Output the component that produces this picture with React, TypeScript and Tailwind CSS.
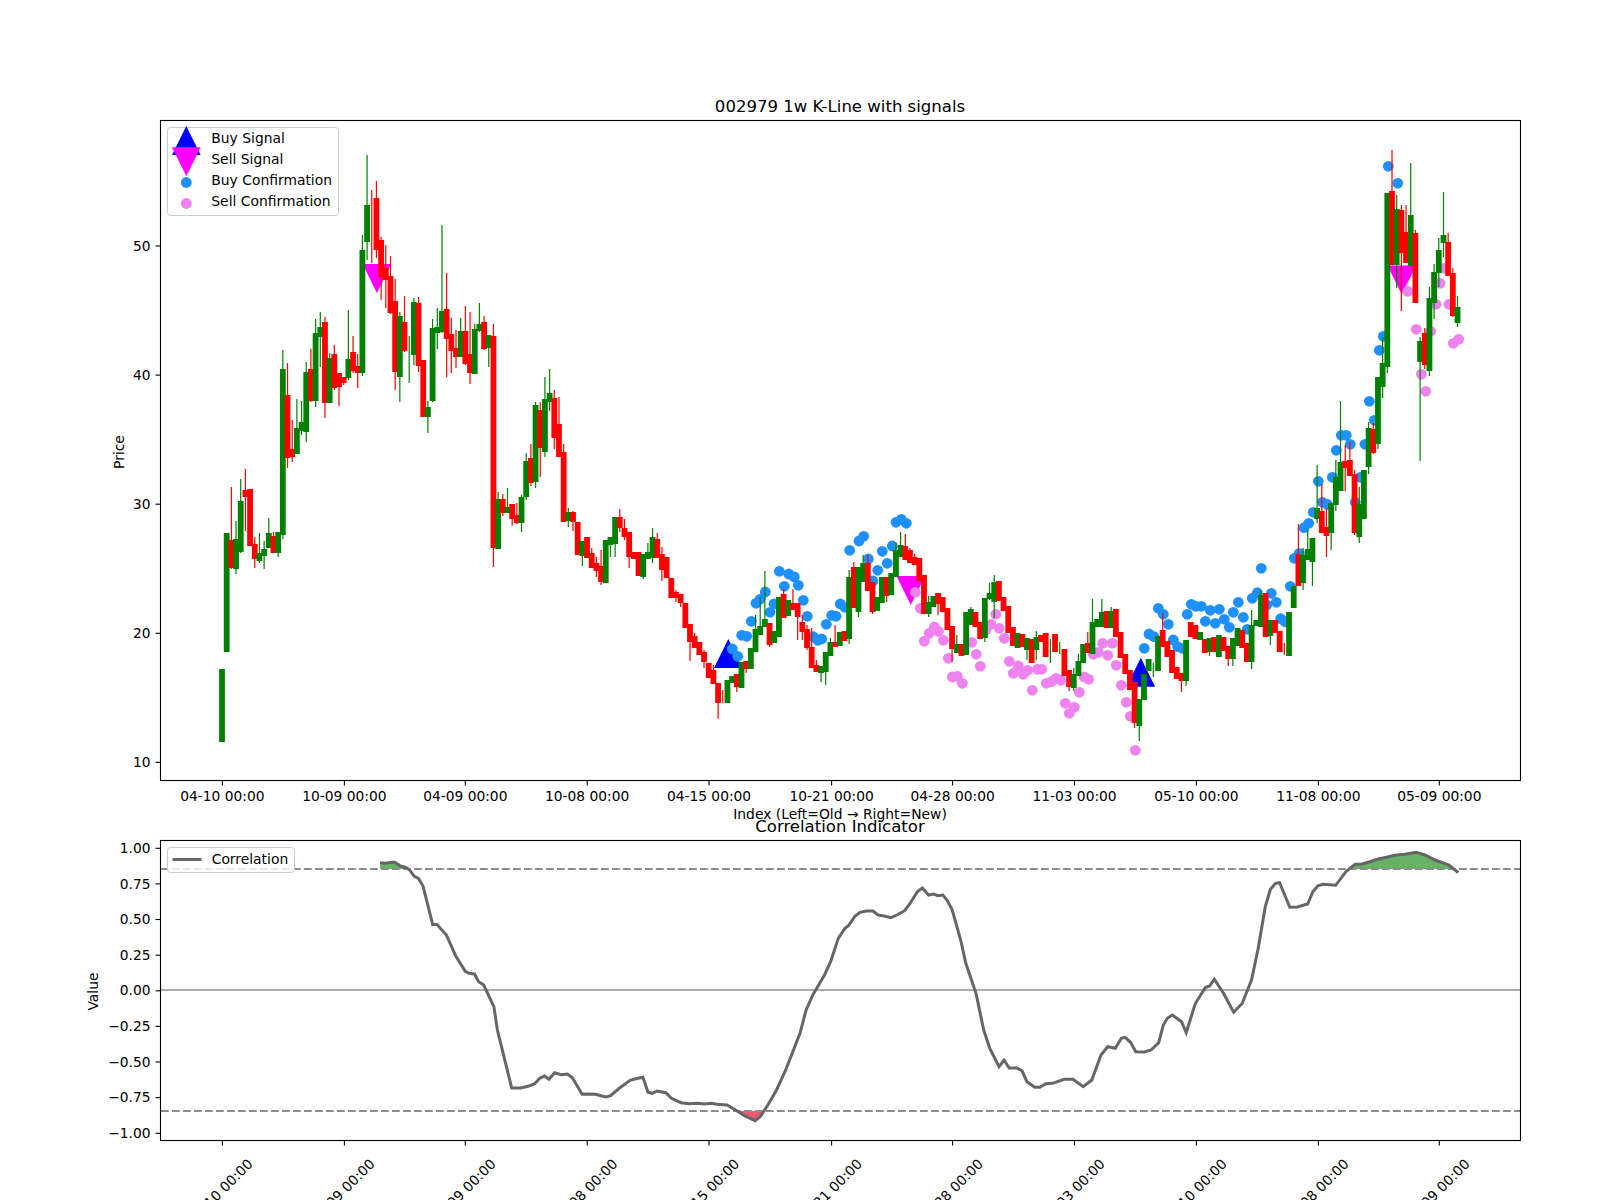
type Candle = [string, number, number, number?, number?];

// page pixels: colour, body top, body bottom, wick top, wick bottom. Equal top/bottom means wick only.
const candles: Candle[] = [
  ["g",669,742],["g",533,652],["r",540,568,487,569],["g",539,569,521,574],["g",501,552,479,553],["r",490,497,469,531],["r",489,546],["r",544,559,537,568],["g",553,561,533,563],["g",549,556,541,569],
  ["g",533,548,518,548],["r",536,553,532,553],["g",532,553,532,557],["g",369,535,350,539],["r",395,458,363,468],["r",449,457,420,462],["g",428,454,399,454],["g",422,431,401,435],["g",372,432,362,442],["r",369,401,349,402],
  ["g",333,401,319,407],["g",327,337,312,367],["r",322,403,317,418],["g",358,403,353,403],["r",354,388,345,390],["r",373,387,373,406],["r",377,383,377,385],["g",359,378,310,380],["r",352,371,336,373],["r",366,373,354,388],
  ["g",250,373,235,376],["g",205,242,155,260],["r",250,250,190,263],["r",198,250,181,258],["r",240,277,237,300],["r",268,280,245,308],["r",276,313,256,314],["r",301,372,279,390],["g",316,377,312,402],["r",322,351,296,352],
  ["g",340,340,336,383],["g",302,355,298,365],["r",303,366,297,372],["r",360,417],["g",407,417,401,433],["g",328,401,319,402],["g",327,333,308,349],["g",311,332,225,333],["r",309,339,273,377],["r",334,351,318,373],
  ["r",348,357,330,368],["g",331,357,318,357],["r",331,364,306,365],["r",354,373,312,384],["g",329,374,324,374],["g",324,331,303,332],["r",322,349,316,350],["g",335,348,335,367],["r",336,548,324,567],["g",499,549,492,549],
  ["r",499,513,494,516],["g",507,513,488,513],["r",504,519,504,526],["r",515,523,503,524],["g",497,523,495,532],["g",461,497,453,500],["r",458,483,444,486],["g",405,482,402,488],["r",410,448,402,477],["g",399,452,377,457],
  ["g",393,402,369,411],["r",398,438,390,449],["r",424,457,397,457],["r",452,522,444,522],["g",512,521,508,527],["r",512,522,511,531],["r",522,555],["g",541,556,541,566],["r",537,558],["r",553,568,548,568],
  ["r",563,571,557,577],["r",566,582,550,585],["g",540,583],["g",537,545,537,557],["g",517,544,517,557],["r",517,528,509,532],["r",528,537,519,540],["r",532,557,532,568],["r",552,559],["r",552,576,552,576],
  ["g",554,577,554,579],["g",552,559,543,559],["g",537,558,528,563],["r",539,558,533,558],["r",554,570,547,581],["r",557,578],["r",578,598],["r",592,598,590,602],["r",594,603,594,607],["r",603,628],
  ["r",624,642,624,661],["r",636,648,633,648],["r",642,655],["r",652,662,650,668],["r",663,678],["r",670,684,665,684],["r",683,703,683,719],["r",697,697,690,703],["g",680,703],["g",676,683],
  ["r",674,687,674,692],["g",662,688],["r",661,669,661,673],["g",648,669],["g",629,652,615,652],["g",626,635,597,635],["g",619,627,571,627],["r",623,645,623,647],["g",631,643],["g",597,637],
  ["r",594,618,589,618],["g",600,616],["r",603,610,589,610],["r",603,617,603,640],["r",622,632,615,640],["r",629,648,625,650],["r",647,668,628,668],["r",665,672,660,672],["g",666,673,666,682],["g",652,672,652,685],
  ["g",642,656,638,656],["r",642,647,625,647],["g",632,646,632,646],["r",631,641],["g",577,639,570,644],["r",567,608,562,608],["g",567,612,567,617],["g",563,582,555,582],["r",563,591,555,591],["r",582,612,582,614],
  ["g",597,611],["g",577,603],["r",577,596,577,602],["g",573,595],["g",550,577,543,577],["g",545,557,532,557],["r",546,560,534,560],["r",550,563,548,563],["r",557,565,554,565],["r",558,581],
  ["r",575,614],["g",602,614,596,617],["g",596,607],["r",593,604,593,615],["r",597,612],["r",608,630],["r",626,649,626,662],["g",644,653,635,653],["r",644,656],["g",612,655],
  ["g",609,625,607,625],["r",612,627],["r",622,639],["g",598,638,598,642],["g",593,599,583,600],["g",582,602,575,618],["r",581,601],["r",597,611],["r",606,633],["r",627,646],
  ["g",633,648],["r",634,647],["g",638,650,638,660],["r",639,663],["g",637,650,631,660],["r",635,642],["r",633,657],["g",639,639,639,663],["r",634,652],["g",642,642,642,654],
  ["r",649,676],["r",670,687,670,691],["g",674,688,668,691],["g",661,676,654,676],["g",644,663],["r",643,653,632,653],["g",622,654,599,654],["g",619,627],["g",612,627,599,627],["r",611,628],
  ["g",611,628,607,628],["r",609,637],["r",632,658],["r",654,674],["r",670,690],["r",682,723,682,728],["g",699,726,699,741],["g",674,700],["g",659,671],["g",663,663,663,677],
  ["g",636,671],["r",630,647,613,647],["r",641,657],["r",650,673],["r",667,679],["r",673,681,673,692],["g",640,681,640,686],["r",622,637],["r",625,639],["g",632,640],
  ["r",639,653],["g",638,652,638,656],["r",637,652],["g",635,657],["r",637,651],["r",646,659,646,666],["g",638,659,638,666],["g",628,646],["r",630,648],["r",643,662],
  ["g",625,662,610,669],["g",620,626],["g",595,627,590,627],["r",593,637],["g",620,636,620,645],["r",620,633],["r",631,652],["r",643,643,643,655],["g",612,656],["g",586,608],
  ["r",554,586,524,586],["g",555,583,548,590],["g",549,560,530,560],["g",538,562,538,586],["g",508,519,465,523],["r",511,533,484,533],["r",527,536,508,557],["g",503,533,503,550],["g",477,505,460,511],["g",462,491,401,491],
  ["r",461,468,445,491],["r",460,476,442,476],["r",474,533,470,535],["g",504,537,487,543],["g",470,519],["g",428,467,422,474],["r",429,453,423,454],["g",377,444,377,449],["g",363,387,337,398],["g",193,367,193,373],
  ["r",191,265,150,265],["g",209,265,195,288],["r",210,253,205,311],["r",232,263,205,263],["g",215,266,163,266],["r",233,303,230,303],["g",341,362,337,461],["r",333,365,328,369],["g",298,371,287,376],["g",272,303,264,319],
  ["g",250,273,238,287],["g",235,243,192,257],["r",242,276,233,276],["r",273,316,268,317],["g",307,323,296,327],
];

const blueDots: [number, number][] = [
  [732.3,649],[737.7,656.3],[741.7,635.3],[746.7,636.3],[751.3,621.3],[756,603.3],[760,599.3],[765.3,592],[774,604],[770,612.3],[779.3,571.3],[784.3,586.3],[788.7,574],[794.3,577],[798.3,585.3],[803.3,600.3],[807.3,616.3],[813.3,636.7],[817.7,640.3],[821.7,639],[826.3,624.3],[831.7,615.3],[836,616.3],[840.3,604],[845,607.3],[849.7,550.3],[859,541],[863.7,536.3],[868.3,559],[873,581],[877.7,570.3],[882.3,551.3],[887.3,563.3],[892.3,546],[896,522.3],[901.3,519.3],[906.3,523.3],
  [1144.3,648.3],[1149,634],[1154,636.7],[1158.3,608.3],[1163.3,614.3],[1168.3,624.3],[1173.3,640],[1177.7,646.7],[1182.3,648.3],[1187.3,614.3],[1191.3,604.3],[1196,606.3],[1201.3,606.3],[1205.3,621.3],[1210.3,610.3],[1215.3,623.3],[1219.3,609.3],[1224.3,619.3],[1229.3,627.3],[1233.3,612.3],[1238.3,602.3],[1243.3,617.3],[1247.3,629.3],[1252.3,598.3],[1257.3,592.7],[1261.3,568.3],[1266.7,605],[1271.3,593.3],[1276.3,602.3],[1280.7,618.7],[1285,621.7],[1290.3,586.3],[1294.3,558.3],[1299.3,553.3],[1304,527.7],[1308.7,523.3],[1313.3,512.3],[1318.3,481.3],[1322.3,502.3],[1327.3,504.3],[1332.3,477.3],[1336.3,450.3],[1341.3,435.3],[1346.3,435.3],[1350.3,444.3],[1355.3,502.3],[1360.3,477.3],[1365,444.3],[1369.3,401.3],[1374.3,420.3],[1379.3,350.3],[1383.3,336.3],[1388.3,166.3],[1397.7,183.3],
];

const pinkDots: [number, number][] = [
  [915.3,592.3],[920.3,608.3],[924.3,641.3],[929.3,633.3],[934.3,627],[938.3,631.3],[943.3,640.3],[948.3,658.3],[952.3,677],[957.3,676.3],[962.3,683.3],[971.7,642.3],[976.3,654.3],[980.3,666.3],[986,630],[991,624.3],[995.7,614.3],[999.3,628.3],[1004.3,638.3],[1009.3,661.3],[1013.3,673.3],[1018.3,666],[1023.3,674.3],[1027.7,670.3],[1032.3,690.3],[1037.3,669.3],[1041.7,669.3],[1046.3,683.3],[1051.3,681.7],[1056,678.3],[1060.7,680.3],[1065.3,703.3],[1069.3,713.3],[1074.3,707.3],[1079.3,692.3],[1084.3,677],[1088.7,679.3],[1093.3,654.3],[1098.3,652.3],[1102.7,643.3],[1107.7,655.3],[1112.3,643.3],[1116.3,665.3],[1121.3,685.3],[1126.3,702.3],[1130.3,716.3],[1135.3,750.3],
  [1407.7,291.3],[1416.3,329.3],[1421.3,374.3],[1425.7,391.3],[1430.7,331.3],[1436,304.3],[1440,283.3],[1444.3,268.3],[1449,304.3],[1453.3,343.3],[1458.7,339.3],
];

// correlation curve, first run read at x/1.96, second run at 800+x/1.96, y at 780+y/3
const corrA = [[745,248],[755,250],[773,246],[785,258],[795,262],[803,270],[812,289],[820,295],[829,318],[848,434],[856,433],[875,465],[893,527],[912,574],[919,580],[930,582],[938,605],[948,615],[968,680],[975,750],[1003,924],[1020,924],[1035,919],[1048,911],[1058,895],[1067,888],[1076,898],[1087,878],[1100,884],[1112,882],[1122,893],[1141,943],[1150,942],[1167,943],[1180,948],[1188,951],[1197,947],[1215,923],[1235,901],[1250,895],[1260,892],[1270,937],[1278,940],[1288,933],[1305,938],[1316,955],[1335,968],[1350,971],[1368,970],[1380,972],[1395,970],[1405,973],[1425,975],[1445,993],[1460,1008],[1480,1022],[1490,1010],[1505,975],[1522,930],[1540,870]];
const corrB = [[0,760],[12,690],[25,645],[48,585],[60,545],[75,475],[88,445],[95,437],[108,408],[118,397],[130,393],[143,393],[153,405],[165,408],[178,413],[190,405],[205,392],[215,372],[230,335],[240,324],[252,345],[262,342],[270,347],[280,345],[288,360],[298,388],[315,480],[325,550],[345,640],[360,750],[372,805],[390,860],[400,840],[410,864],[425,864],[435,872],[445,905],[460,922],[470,922],[482,911],[495,910],[518,898],[535,898],[555,920],[572,900],[590,825],[603,800],[618,805],[630,775],[637,772],[648,787],[658,815],[675,816],[688,810],[703,788],[712,735],[720,715],[730,705],[748,725],[757,758],[775,670],[795,622],[803,618],[812,598],[830,640],[850,697],[867,670],[885,600],[898,505],[912,380],[922,328],[932,310],[940,308],[950,345],[960,382],[975,381],[995,372],[1005,335],[1015,317],[1025,313],[1050,316],[1070,275],[1088,253],[1100,253],[1115,246],[1135,236],[1150,232],[1165,226],[1185,223],[1208,217],[1225,225],[1245,240],[1272,255],[1290,278]];

const corr = [
  ...corrA.map(([x, y]) => [x / 1.96, 780 + y / 3]),
  ...corrB.map(([x, y]) => [800 + x / 1.96, 780 + y / 3]),
];
const corrLine = corr.map(([x, y]) => `${x.toFixed(1)},${y.toFixed(1)}`).join(" ");
const firstX = corr[0][0].toFixed(1);
const lastX = corr[corr.length - 1][0].toFixed(1);

const xTicks: [number, string][] = [
  [222.4,"04-10 00:00"],[344.4,"10-09 00:00"],[465.3,"04-09 00:00"],[587.2,"10-08 00:00"],[709,"04-15 00:00"],[831.6,"10-21 00:00"],[952.6,"04-28 00:00"],[1074.5,"11-03 00:00"],[1196.4,"05-10 00:00"],[1318.4,"11-08 00:00"],[1439.3,"05-09 00:00"],
];
const priceTicks: [number, string][] = [[246,"50"],[375.1,"40"],[504.2,"30"],[633.3,"20"],[762.4,"10"]];
const corrTicks: [number, string][] = [[848.3,"1.00"],[883.9,"0.75"],[919.5,"0.50"],[955.2,"0.25"],[990.8,"0.00"],[1026.4,"−0.25"],[1062,"−0.50"],[1097.7,"−0.75"],[1133.3,"−1.00"]];

function up(x: number, apex: number) {
  return `${x},${apex} ${x + 14.3},${apex + 29} ${x - 14.3},${apex + 29}`;
}
function down(x: number, top: number) {
  return `${x - 14.3},${top} ${x + 14.3},${top} ${x},${top + 29}`;
}

function Box({ x, y, w, h }: { x: number; y: number; w: number; h: number }) {
  return <rect x={x} y={y} width={w} height={h} className="fill-none stroke-black stroke-[1.1px]" />;
}

function PriceChart() {
  return (
    <svg viewBox="0 0 1600 822" className="block w-[1600px] h-[822px] shrink-0">
      <polygon points={down(376.9, 264)} className="fill-[#ff00ff]" />
      <polygon points={up(728.3, 639)} className="fill-[#0000ff]" />
      <polygon points={down(910.8, 576)} className="fill-[#ff00ff]" />
      <polygon points={up(1140.8, 657.7)} className="fill-[#0000ff]" />
      <polygon points={down(1401.8, 265.5)} className="fill-[#ff00ff]" />

      {blueDots.map(([x, y], i) => (
        <circle key={i} cx={x} cy={y} r={5.4} className="fill-[#1e90ff]" />
      ))}
      {pinkDots.map(([x, y], i) => (
        <circle key={i} cx={x} cy={y} r={5.4} className="fill-[#ee82ee]" />
      ))}

      {candles.map(([c, top, bottom, wt, wb], i) => {
        const x = 222 + 4.68 * i;
        const color = c === "g" ? "fill-[#008000]" : "fill-[#ff0000]";
        return (
          <g key={i} className={color}>
            <rect x={x - 0.6} y={wt ?? top} width={1.2} height={(wb ?? bottom) - (wt ?? top)} />
            {bottom > top && <rect x={x - 2.9} y={top} width={5.8} height={bottom - top} />}
          </g>
        );
      })}

      <Box x={160.5} y={120.5} w={1360} h={660} />
      {xTicks.map(([x, label]) => (
        <g key={label}>
          <line x1={x} x2={x} y1={781} y2={785.5} className="stroke-black stroke-[1.1px]" />
          <text x={x} y={801} textAnchor="middle" className="text-[13.8px] fill-black">{label}</text>
        </g>
      ))}
      {priceTicks.map(([y, label]) => (
        <g key={label}>
          <line x1={155.5} x2={160} y1={y} y2={y} className="stroke-black stroke-[1.1px]" />
          <text x={150.5} y={y + 5} textAnchor="end" className="text-[13.8px] fill-black">{label}</text>
        </g>
      ))}

      <text x={840} y={112} textAnchor="middle" className="text-[16.55px] fill-black">002979 1w K-Line with signals</text>
      <text x={840} y={819} textAnchor="middle" className="text-[13.89px] fill-black">Index (Left=Old → Right=New)</text>
      <text transform="rotate(-90 124 452)" x={124} y={452} textAnchor="middle" className="text-[13.89px] fill-black">Price</text>

      <rect x={167.5} y={127.5} width={171} height={88} rx={3} className="fill-white/80 stroke-[#cccccc] stroke-1" />
      <polygon points={up(186.3, 126)} className="fill-[#0000ff]" />
      <polygon points={down(186.3, 147.3)} className="fill-[#ff00ff]" />
      <circle cx={186.3} cy={182.5} r={5.4} className="fill-[#1e90ff]" />
      <circle cx={186.3} cy={203.5} r={5.4} className="fill-[#ee82ee]" />
      <text x={211.3} y={143} className="text-[13.89px] fill-black">Buy Signal</text>
      <text x={211.3} y={164} className="text-[13.89px] fill-black">Sell Signal</text>
      <text x={211.3} y={185} className="text-[13.89px] fill-black">Buy Confirmation</text>
      <text x={211.3} y={206} className="text-[13.89px] fill-black">Sell Confirmation</text>
    </svg>
  );
}

function CorrelationChart() {
  return (
    <svg viewBox="0 822 1600 378" className="block w-[1600px] h-[378px] shrink-0 overflow-visible">
      <defs>
        <clipPath id="aboveUpper"><rect x={160} y={840} width={1360} height={29} /></clipPath>
        <clipPath id="belowLower"><rect x={160} y={1111} width={1360} height={29} /></clipPath>
      </defs>
      <polygon points={`${corrLine} ${lastX},869 ${firstX},869`} clipPath="url(#aboveUpper)" fillRule="evenodd" className="fill-[#008000]/60" />
      <polygon points={`${corrLine} ${lastX},1111 ${firstX},1111`} clipPath="url(#belowLower)" fillRule="evenodd" className="fill-[#dc143c]/70" />

      <line x1={161} x2={1520} y1={869} y2={869} strokeDasharray="7.7 3.3" className="stroke-[#8c8c8c] stroke-2" />
      <line x1={161} x2={1520} y1={1111} y2={1111} strokeDasharray="7.7 3.3" className="stroke-[#8c8c8c] stroke-2" />
      <line x1={161} x2={1520} y1={990} y2={990} className="stroke-[#adadad] stroke-2" />
      <polyline points={corrLine} className="fill-none stroke-[#666666] stroke-[3px]" />

      <Box x={160.5} y={840.5} w={1360} h={300} />
      {xTicks.map(([x, label]) => (
        <g key={label}>
          <line x1={x} x2={x} y1={1141} y2={1145.5} className="stroke-black stroke-[1.1px]" />
          <text transform={`rotate(-45 ${x - 2} 1191)`} x={x - 2} y={1196} textAnchor="middle" className="text-[13.8px] fill-black">{label}</text>
        </g>
      ))}
      {corrTicks.map(([y, label]) => (
        <g key={label}>
          <line x1={155.5} x2={160} y1={y} y2={y} className="stroke-black stroke-[1.1px]" />
          <text x={150.5} y={y + 4.6} textAnchor="end" className="text-[13.8px] fill-black">{label}</text>
        </g>
      ))}

      <text x={840} y={831.5} textAnchor="middle" className="text-[16.55px] fill-black">Correlation Indicator</text>
      <text transform="rotate(-90 98 991.5)" x={98} y={991.5} textAnchor="middle" className="text-[13.89px] fill-black">Value</text>

      <rect x={167.5} y={847.5} width={127} height={25} rx={3} className="fill-white/80 stroke-[#cccccc] stroke-1" />
      <line x1={172.5} x2={201.5} y1={859.5} y2={859.5} className="stroke-[#666666] stroke-[3px]" />
      <text x={211.7} y={863.5} className="text-[13.89px] fill-black">Correlation</text>
    </svg>
  );
}

export default function App() {
  return (
    <div className="w-[1600px] h-[1200px] bg-white overflow-hidden flex flex-col font-['DejaVu_Sans',sans-serif]">
      <PriceChart />
      <CorrelationChart />
    </div>
  );
}
